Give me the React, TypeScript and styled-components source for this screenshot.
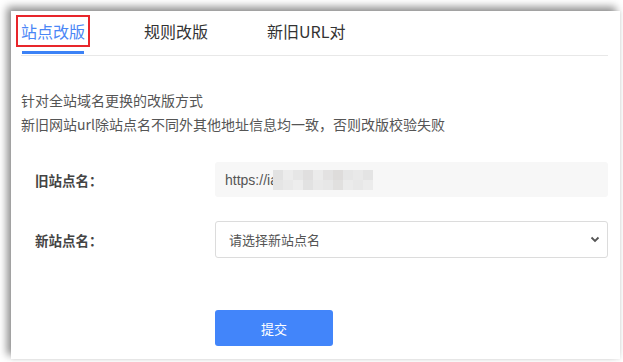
import React from "react";
import styled, { createGlobalStyle } from "styled-components";

const GlobalStyle = createGlobalStyle`
  html, body {
    margin: 0;
    padding: 0;
    background: #ffffff;
    font-family: "Noto Sans CJK SC", "Liberation Sans", sans-serif;
  }
`;

const Page = styled.div`
  width: 623px;
  height: 362px;
  padding: 11px 3px 3px 11px;
  box-sizing: border-box;
  overflow: hidden;
`;

const Panel = styled.div`
  height: 100%;
  background: #fff;
  box-shadow: -4px -4px 8px rgba(0, 0, 0, 0.45), 1px 1px 3px rgba(0, 0, 0, 0.06);
  padding: 0 12px 0 10px;
  box-sizing: border-box;
`;

const TabBar = styled.div`
  display: flex;
  height: 44px;
  border-bottom: 1px solid #e8e8e8;
`;

const Tab = styled.div<{ $active?: boolean }>`
  position: relative;
  margin-right: 59px;
  padding-top: 9px;
  font-size: 16px;
  line-height: 22px;
  color: ${(p) => (p.$active ? "#4a86f6" : "#333")};
  height: 22px;

  &::after {
    content: "";
    display: ${(p) => (p.$active ? "block" : "none")};
    position: absolute;
    left: 1px;
    right: 1px;
    top: 40px;
    height: 3px;
    background: #3c82f6;
  }
`;

/* red annotation box drawn round the active tab in the screenshot */
const Highlight = styled.span`
  display: block;
  outline: 2px solid #e8262b;
  outline-offset: 3px;
`;

const Desc = styled.div`
  margin-top: 32px;
  font-size: 14px;
  line-height: 24px;
  color: #555;
`;

const Form = styled.div`
  margin-top: 26px;
  display: flex;
  flex-direction: column;
`;

const Row = styled.div<{ $gap?: number }>`
  display: flex;
  align-items: center;
  margin-bottom: ${(p) => p.$gap ?? 0}px;
`;

const Label = styled.div`
  width: 194px;
  padding-left: 14px;
  box-sizing: border-box;
  font-size: 13.5px;
  font-weight: bold;
  color: #444;
`;

const ReadOnlyBox = styled.div`
  flex: 1;
  height: 35px;
  background: #f7f7f7;
  border-radius: 3px;
  display: flex;
  align-items: center;
  padding-left: 10px;
  font-family: "Liberation Sans", "Noto Sans CJK SC", sans-serif;
  font-size: 14px;
  color: #555;
`;

/* pixelated blur hiding the rest of the old domain */
const Mosaic = styled.div`
  display: grid;
  grid-template-columns: repeat(10, 10px);
  grid-template-rows: repeat(2, 10px);
  margin-left: -5px;
`;

const Cell = styled.div<{ $c: string }>`
  background: ${(p) => p.$c};
`;

const SelectBox = styled.div`
  flex: 1;
  height: 37px;
  box-sizing: border-box;
  border: 1px solid #dcdcdc;
  border-radius: 3px;
  display: flex;
  align-items: center;
  justify-content: space-between;
  padding: 0 7px 0 13px;
  font-size: 13px;
  color: #555;
`;

const SubmitButton = styled.button`
  margin-left: 194px;
  width: 118px;
  height: 36px;
  border: none;
  border-radius: 3px;
  background: #4285fa;
  color: #fff;
  font-family: "Noto Sans CJK SC", sans-serif;
  font-size: 13px;
`;

const mosaicColors = [
  "#e2e2e2", "#ececec", "#e6e6e6", "#e0dfdf", "#ebebeb", "#e3e2e2", "#dedcdb", "#e6e6e6", "#e9e9e9", "#e4e4e4",
  "#e5e5e5", "#e9e9e9", "#ededed", "#e2e2e2", "#e9e9e9", "#e7e7e7", "#e1e0df", "#ebebeb", "#e8e8e8", "#ececec",
];

const Chevron = () => (
  <svg width="10" height="7" viewBox="0 0 10 7">
    <path d="M1.5 1.5 L5 5 L8.5 1.5" stroke="#555" strokeWidth="1.8" fill="none" />
  </svg>
);

const App = () => {
  return (
    <Page>
      <GlobalStyle />
      <Panel>
        <TabBar>
          <Tab $active>
            <Highlight>站点改版</Highlight>
          </Tab>
          <Tab>规则改版</Tab>
          <Tab>新旧URL对</Tab>
        </TabBar>
        <Desc>
          针对全站域名更换的改版方式
          <br />
          新旧网站url除站点名不同外其他地址信息均一致，否则改版校验失败
        </Desc>
        <Form>
          <Row $gap={24}>
            <Label>旧站点名：</Label>
            <ReadOnlyBox>
              https://ia
              <Mosaic>
                {mosaicColors.map((c, i) => (
                  <Cell key={i} $c={c} />
                ))}
              </Mosaic>
            </ReadOnlyBox>
          </Row>
          <Row $gap={52}>
            <Label>新站点名：</Label>
            <SelectBox>
              请选择新站点名
              <Chevron />
            </SelectBox>
          </Row>
          <Row>
            <SubmitButton>提交</SubmitButton>
          </Row>
        </Form>
      </Panel>
    </Page>
  );
};

export default App;
